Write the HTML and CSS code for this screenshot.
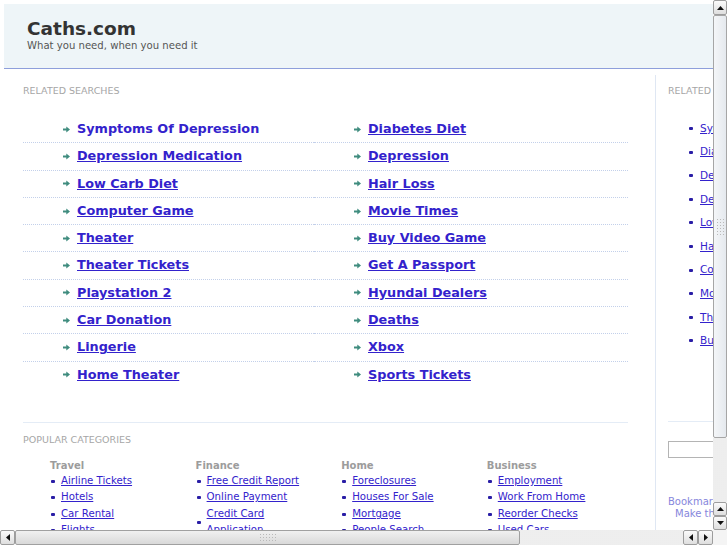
FILE: index.html
```html
<!DOCTYPE html>
<html lang="en">
<head>
<meta charset="utf-8">
<title>Caths.com</title>
<link rel="stylesheet" href="styles.css">
</head>
<body>
<div class="window">
  <div class="viewport">
    <div class="page">
      <header class="site-header">
        <h1 class="site-title">Caths.com</h1>
        <p class="tagline">What you need, when you need it</p>
      </header>
      <div class="main">
        <div class="primary">
          <h2 class="label">Related Searches</h2>
          <ul class="searches">
            <li class="nohover"><svg class="arrow" viewBox="0 0 7 7" width="7" height="7"><path d="M0 2.6h3.3V0.6L7 3.5 3.3 6.4V4.4H0z"/></svg><a href="#">Symptoms Of Depression</a></li>
            <li><svg class="arrow" viewBox="0 0 7 7" width="7" height="7"><path d="M0 2.6h3.3V0.6L7 3.5 3.3 6.4V4.4H0z"/></svg><a href="#">Diabetes Diet</a></li>
            <li><svg class="arrow" viewBox="0 0 7 7" width="7" height="7"><path d="M0 2.6h3.3V0.6L7 3.5 3.3 6.4V4.4H0z"/></svg><a href="#">Depression Medication</a></li>
            <li><svg class="arrow" viewBox="0 0 7 7" width="7" height="7"><path d="M0 2.6h3.3V0.6L7 3.5 3.3 6.4V4.4H0z"/></svg><a href="#">Depression</a></li>
            <li><svg class="arrow" viewBox="0 0 7 7" width="7" height="7"><path d="M0 2.6h3.3V0.6L7 3.5 3.3 6.4V4.4H0z"/></svg><a href="#">Low Carb Diet</a></li>
            <li><svg class="arrow" viewBox="0 0 7 7" width="7" height="7"><path d="M0 2.6h3.3V0.6L7 3.5 3.3 6.4V4.4H0z"/></svg><a href="#">Hair Loss</a></li>
            <li><svg class="arrow" viewBox="0 0 7 7" width="7" height="7"><path d="M0 2.6h3.3V0.6L7 3.5 3.3 6.4V4.4H0z"/></svg><a href="#">Computer Game</a></li>
            <li><svg class="arrow" viewBox="0 0 7 7" width="7" height="7"><path d="M0 2.6h3.3V0.6L7 3.5 3.3 6.4V4.4H0z"/></svg><a href="#">Movie Times</a></li>
            <li><svg class="arrow" viewBox="0 0 7 7" width="7" height="7"><path d="M0 2.6h3.3V0.6L7 3.5 3.3 6.4V4.4H0z"/></svg><a href="#">Theater</a></li>
            <li><svg class="arrow" viewBox="0 0 7 7" width="7" height="7"><path d="M0 2.6h3.3V0.6L7 3.5 3.3 6.4V4.4H0z"/></svg><a href="#">Buy Video Game</a></li>
            <li><svg class="arrow" viewBox="0 0 7 7" width="7" height="7"><path d="M0 2.6h3.3V0.6L7 3.5 3.3 6.4V4.4H0z"/></svg><a href="#">Theater Tickets</a></li>
            <li><svg class="arrow" viewBox="0 0 7 7" width="7" height="7"><path d="M0 2.6h3.3V0.6L7 3.5 3.3 6.4V4.4H0z"/></svg><a href="#">Get A Passport</a></li>
            <li><svg class="arrow" viewBox="0 0 7 7" width="7" height="7"><path d="M0 2.6h3.3V0.6L7 3.5 3.3 6.4V4.4H0z"/></svg><a href="#">Playstation 2</a></li>
            <li><svg class="arrow" viewBox="0 0 7 7" width="7" height="7"><path d="M0 2.6h3.3V0.6L7 3.5 3.3 6.4V4.4H0z"/></svg><a href="#">Hyundai Dealers</a></li>
            <li><svg class="arrow" viewBox="0 0 7 7" width="7" height="7"><path d="M0 2.6h3.3V0.6L7 3.5 3.3 6.4V4.4H0z"/></svg><a href="#">Car Donation</a></li>
            <li><svg class="arrow" viewBox="0 0 7 7" width="7" height="7"><path d="M0 2.6h3.3V0.6L7 3.5 3.3 6.4V4.4H0z"/></svg><a href="#">Deaths</a></li>
            <li><svg class="arrow" viewBox="0 0 7 7" width="7" height="7"><path d="M0 2.6h3.3V0.6L7 3.5 3.3 6.4V4.4H0z"/></svg><a href="#">Lingerie</a></li>
            <li><svg class="arrow" viewBox="0 0 7 7" width="7" height="7"><path d="M0 2.6h3.3V0.6L7 3.5 3.3 6.4V4.4H0z"/></svg><a href="#">Xbox</a></li>
            <li><svg class="arrow" viewBox="0 0 7 7" width="7" height="7"><path d="M0 2.6h3.3V0.6L7 3.5 3.3 6.4V4.4H0z"/></svg><a href="#">Home Theater</a></li>
            <li><svg class="arrow" viewBox="0 0 7 7" width="7" height="7"><path d="M0 2.6h3.3V0.6L7 3.5 3.3 6.4V4.4H0z"/></svg><a href="#">Sports Tickets</a></li>
          </ul>
          <section class="popular">
            <h2 class="label">Popular Categories</h2>
            <div class="categories">
              <div class="cat">
                <h3>Travel</h3>
                <ul>
                  <li><span class="dot"></span><a href="#">Airline Tickets</a></li>
                  <li><span class="dot"></span><a href="#">Hotels</a></li>
                  <li><span class="dot"></span><a href="#">Car Rental</a></li>
                  <li><span class="dot"></span><a href="#">Flights</a></li>
                  <li><span class="dot"></span><a href="#">Cruises</a></li>
                </ul>
              </div>
              <div class="cat">
                <h3>Finance</h3>
                <ul>
                  <li><span class="dot"></span><a href="#">Free Credit Report</a></li>
                  <li><span class="dot"></span><a href="#">Online Payment</a></li>
                  <li><span class="dot"></span><a href="#">Credit Card Application</a></li>
                  <li><span class="dot"></span><a href="#">Insurance</a></li>
                </ul>
              </div>
              <div class="cat">
                <h3>Home</h3>
                <ul>
                  <li><span class="dot"></span><a href="#">Foreclosures</a></li>
                  <li><span class="dot"></span><a href="#">Houses For Sale</a></li>
                  <li><span class="dot"></span><a href="#">Mortgage</a></li>
                  <li><span class="dot"></span><a href="#">People Search</a></li>
                  <li><span class="dot"></span><a href="#">Home Security</a></li>
                </ul>
              </div>
              <div class="cat">
                <h3>Business</h3>
                <ul>
                  <li><span class="dot"></span><a href="#">Employment</a></li>
                  <li><span class="dot"></span><a href="#">Work From Home</a></li>
                  <li><span class="dot"></span><a href="#">Reorder Checks</a></li>
                  <li><span class="dot"></span><a href="#">Used Cars</a></li>
                  <li><span class="dot"></span><a href="#">Small Business</a></li>
                </ul>
              </div>
            </div>
          </section>
        </div>
        <aside class="secondary">
          <h2 class="label">Related Searches</h2>
          <ul class="side-list">
            <li><span class="dot"></span><a href="#">Symptoms Of Depression</a></li>
            <li><span class="dot"></span><a href="#">Diabetes Diet</a></li>
            <li><span class="dot"></span><a href="#">Depression Medication</a></li>
            <li><span class="dot"></span><a href="#">Depression</a></li>
            <li><span class="dot"></span><a href="#">Low Carb Diet</a></li>
            <li><span class="dot"></span><a href="#">Hair Loss</a></li>
            <li><span class="dot"></span><a href="#">Computer Game</a></li>
            <li><span class="dot"></span><a href="#">Movie Times</a></li>
            <li><span class="dot"></span><a href="#">Theater</a></li>
            <li><span class="dot"></span><a href="#">Buy Video Game</a></li>
          </ul>
          <div class="side-search">
            <input class="search-box" type="text" aria-label="Search">
            <p class="bookmark">Bookmark this page</p>
            <p class="bookmark indent">Make this your homepage</p>
          </div>
        </aside>
      </div>
    </div>
  </div>

  <div class="vscroll">
    <div class="sb-btn"><svg viewBox="0 0 7 4" width="7" height="4"><path d="M0 4L3.5 0 7 4z"/></svg></div>
    <div class="vthumb"><span class="grip vgrip"></span></div>
    <div class="track"></div>
    <div class="sb-btn small"><svg viewBox="0 0 7 4" width="7" height="4"><path d="M0 4L3.5 0 7 4z"/></svg></div>
    <div class="sb-btn small"><svg viewBox="0 0 7 4" width="7" height="4"><path d="M0 0L3.5 4 7 0z"/></svg></div>
  </div>

  <div class="hscroll">
    <div class="sb-btn hbtn"><svg viewBox="0 0 4 7" width="4" height="7"><path d="M4 0L0 3.5 4 7z"/></svg></div>
    <div class="hthumb"><span class="grip hgrip"></span></div>
    <div class="track"></div>
    <div class="sb-btn hbtn"><svg viewBox="0 0 4 7" width="4" height="7"><path d="M4 0L0 3.5 4 7z"/></svg></div>
    <div class="sb-btn hbtn"><svg viewBox="0 0 4 7" width="4" height="7"><path d="M0 0L4 3.5 0 7z"/></svg></div>
  </div>

  <div class="corner"></div>
</div>
</body>
</html>
```

FILE: styles.css
```css
html, body {
  margin: 0;
  padding: 0;
  background: #ffffff;
}

body {
  font-family: "DejaVu Sans", Verdana, sans-serif;
}

.window {
  display: grid;
  grid-template-columns: 713px 14px;
  grid-template-rows: 530px 15px;
  width: 727px;
  height: 545px;
  overflow: hidden;
}

.viewport {
  overflow: hidden;
  background: #ffffff;
}

.page {
  width: 939px;
  padding: 4px 0 0 4px;
}

/* Header */
.site-header {
  background: #eef5f8;
  border-bottom: 1px solid #8e9fdb;
  padding: 14px 23px 16px;
}

.site-title {
  margin: 0;
  font-size: 18.5px;
  line-height: 22px;
  font-weight: bold;
  color: #333333;
}

.tagline {
  margin: 0;
  font-size: 10.1px;
  line-height: 12px;
  color: #555555;
}

/* Main */
.main {
  display: flex;
  margin-top: 6px;
}

.primary {
  width: 605px;
  padding: 10.2px 27px 0 19px;
  border-right: 1px solid #dfe7f3;
  flex: none;
}

.secondary {
  width: 270px;
  padding: 10.2px 0 0 12px;
  flex: none;
}

.label {
  margin: 0;
  font-size: 9.5px;
  line-height: 12px;
  font-weight: normal;
  text-transform: uppercase;
  color: #a6a6a6;
}

/* Related searches */
.searches {
  list-style: none;
  margin: 18.8px 0 0;
  padding: 0;
  display: grid;
  grid-template-columns: 291px 314px;
}

.searches li {
  display: flex;
  align-items: center;
  gap: 7px;
  padding-left: 40px;
  line-height: 26.3px;
  border-bottom: 1px dotted #c3d0ea;
  white-space: nowrap;
}

.searches li:nth-last-child(-n+2) {
  border-bottom: none;
}

.arrow {
  flex: none;
  fill: #3f8c7e;
}

.searches a {
  font-size: 12.8px;
  font-weight: bold;
  color: #3322cc;
}

.searches li.nohover a {
  text-decoration: none;
}

/* Popular categories */
.popular {
  margin-top: 33.8px;
  border-top: 1px solid #e4ecf6;
  padding-top: 11.7px;
}

.categories {
  display: grid;
  grid-template-columns: repeat(4, 145.6px);
  padding-left: 27px;
  margin-top: 11.5px;
}

.cat h3 {
  margin: 0;
  font-size: 10px;
  line-height: 15px;
  font-weight: bold;
  color: #9c9c9c;
}

.cat ul {
  list-style: none;
  margin: 0;
  padding: 0;
  width: 110px;
}

.cat li {
  display: flex;
  align-items: center;
  padding-left: 1px;
  font-size: 10.2px;
  line-height: 16.5px;
}

.dot {
  flex: none;
  width: 4px;
  height: 3px;
  border-radius: 1px;
  background: #2a1ea6;
  margin-right: 6px;
}

.cat a {
  color: #3322cc;
}

/* Side column */
.side-list {
  list-style: none;
  margin: 19.6px 0 0;
  padding: 0 0 0 21px;
}

.side-list li {
  display: flex;
  align-items: center;
  font-size: 10.5px;
  line-height: 23.6px;
  white-space: nowrap;
}

.side-list .dot {
  margin-right: 7px;
}

.side-list a {
  color: #3322cc;
}

.side-search {
  margin-top: 68.2px;
  border-top: 1px solid #e4ecf6;
  padding-top: 19px;
}

.search-box {
  display: block;
  box-sizing: border-box;
  width: 140px;
  height: 17px;
  margin: 0;
  border: 1px solid #b4b4b4;
  padding: 0 2px;
  font: inherit;
  background: #ffffff;
}

.bookmark {
  margin: 0;
  font-size: 10px;
  line-height: 12.6px;
  color: #8686dc;
}

.side-search .bookmark:first-of-type {
  margin-top: 37.6px;
}

.bookmark.indent {
  padding-left: 7px;
}

/* Scrollbars */
.vscroll {
  display: flex;
  flex-direction: column;
}

.hscroll {
  display: flex;
}

.sb-btn {
  flex: none;
  box-sizing: border-box;
  height: 15px;
  border: 1px solid #9d9d9d;
  border-radius: 2px;
  background: linear-gradient(#fbfbfb, #dedede);
  display: flex;
  align-items: center;
  justify-content: center;
}

.sb-btn.small {
  height: 14px;
}

.sb-btn.hbtn {
  width: 15px;
  height: 15px;
}

.sb-btn svg {
  fill: #111111;
}

.track {
  flex: 1;
  background-color: #f7f7f7;
  background-image: radial-gradient(circle, #e2e2e2 0.6px, transparent 0.8px);
  background-size: 2px 2px;
}

.vthumb {
  flex: none;
  box-sizing: border-box;
  height: 423px;
  border: 1px solid #a6a6a6;
  border-radius: 2px;
  background: linear-gradient(90deg, #f4f6f8, #e5e9ee);
  display: flex;
  align-items: center;
  justify-content: center;
}

.hthumb {
  flex: none;
  box-sizing: border-box;
  width: 505px;
  border: 1px solid #a0a0a0;
  border-radius: 2px;
  background: linear-gradient(#f0f0f0, #d9d9d9);
  display: flex;
  align-items: center;
  justify-content: center;
}

.grip {
  display: block;
  background-image: radial-gradient(circle, #b9b9b9 0.7px, transparent 0.9px);
  background-size: 3px 3px;
}

.vgrip {
  width: 9px;
  height: 17px;
}

.hgrip {
  width: 18px;
  height: 9px;
}

.corner {
  background: #f4f4f4;
}
```
